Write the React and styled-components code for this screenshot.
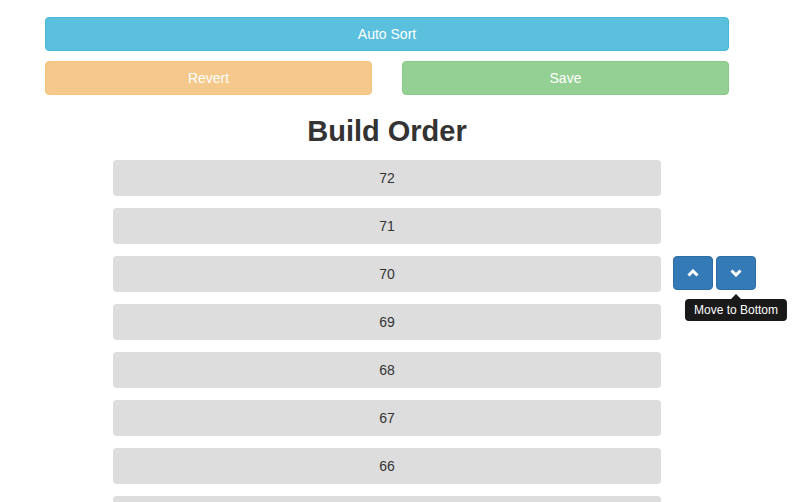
import React from 'react'
import styled, { createGlobalStyle } from 'styled-components'

const GlobalStyle = createGlobalStyle`
  html, body {
    margin: 0;
    padding: 0;
    background: #fff;
    font-family: "Liberation Sans", Arial, sans-serif;
    font-size: 14px;
    color: #333;
  }
`

const Page = styled.div`
  width: 684px;
  margin-left: 45px;
  padding-top: 17px;
`

const colors = {
  info: { bg: '#5bc0de', border: '#46b8da' },
  warning: { bg: '#f0ad4e', border: '#eea236' },
  success: { bg: '#5cb85c', border: '#4cae4c' },
  primary: { bg: '#337ab7', border: '#2e6da4' },
}

const Button = styled.button`
  box-sizing: border-box;
  display: block;
  width: 100%;
  height: 34px;
  padding: 6px 12px;
  font-family: inherit;
  font-size: 14px;
  line-height: 20px;
  color: #fff;
  background: ${p => colors[p.$variant].bg};
  border: 1px solid ${p => colors[p.$variant].border};
  border-radius: 4px;
  opacity: ${p => (p.disabled ? 0.65 : 1)};
  cursor: ${p => (p.disabled ? 'not-allowed' : 'pointer')};
`

const ButtonRow = styled.div`
  display: grid;
  grid-template-columns: 1fr 1fr;
  gap: 30px;
  margin-top: 10px;
`

const Title = styled.h2`
  margin: 20px 0 12px;
  font-size: 29px;
  font-weight: 700;
  line-height: 33px;
  text-align: center;
  color: #333;
`

const List = styled.div`
  display: flex;
  flex-direction: column;
  gap: 12px;
`

const Row = styled.div`
  display: flex;
  align-items: flex-start;
  gap: 12px;
  padding-left: 68px;
`

const Item = styled.div`
  width: 548px;
  height: 36px;
  flex: none;
  display: flex;
  align-items: center;
  justify-content: center;
  background: #ddd;
  border-radius: 4px;
  font-size: 14px;
  color: #333;
`

const Actions = styled.div`
  display: flex;
  gap: 3px;
`

const IconButton = styled.button`
  position: relative;
  width: 40px;
  height: 34px;
  padding: 0;
  display: flex;
  align-items: center;
  justify-content: center;
  background: ${colors.primary.bg};
  border: 1px solid ${colors.primary.border};
  border-radius: 4px;
  cursor: pointer;
`

const Tooltip = styled.div`
  position: absolute;
  top: 42px;
  left: 50%;
  transform: translateX(-50%);
  white-space: nowrap;
  padding: 3px 9px;
  font-size: 12px;
  line-height: 16px;
  color: #fff;
  background: rgba(0, 0, 0, 0.9);
  border-radius: 4px;

  &::before {
    content: '';
    position: absolute;
    top: -5px;
    left: 50%;
    margin-left: -5px;
    border-width: 0 5px 5px;
    border-style: solid;
    border-color: transparent transparent rgba(0, 0, 0, 0.9);
  }
`

function Chevron({ up }) {
  return (
    <svg width="12" height="8" viewBox="0 0 12 8">
      <polyline
        points={up ? '1.5,6.5 6,2 10.5,6.5' : '1.5,1.5 6,6 10.5,1.5'}
        fill="none"
        stroke="#fff"
        strokeWidth="3"
        strokeLinejoin="miter"
      />
    </svg>
  )
}

const builds = [72, 71, 70, 69, 68, 67, 66, 65]

export default function App() {
  return (
    <>
      <GlobalStyle />
      <Page>
        <Button $variant="info">Auto Sort</Button>
        <ButtonRow>
          <Button $variant="warning" disabled>Revert</Button>
          <Button $variant="success" disabled>Save</Button>
        </ButtonRow>
        <Title>Build Order</Title>
        <List>
          {builds.map(n => (
            <Row key={n}>
              <Item>{n}</Item>
              {n === 70 && (
                <Actions>
                  <IconButton aria-label="Move to Top">
                    <Chevron up />
                  </IconButton>
                  <IconButton aria-label="Move to Bottom">
                    <Chevron />
                    <Tooltip>Move to Bottom</Tooltip>
                  </IconButton>
                </Actions>
              )}
            </Row>
          ))}
        </List>
      </Page>
    </>
  )
}
